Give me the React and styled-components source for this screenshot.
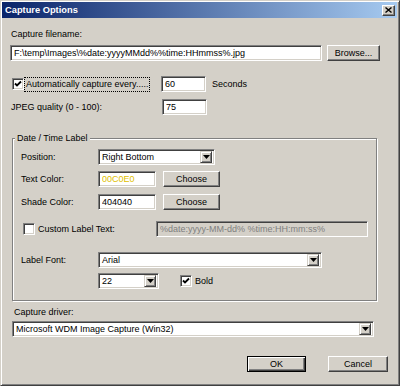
import React from 'react';
import styled, { createGlobalStyle } from 'styled-components';

const GlobalStyle = createGlobalStyle`
  body {
    margin: 0;
    background: #d4d0c8;
  }
`;

const Window = styled.div`
  width: 400px;
  height: 386px;
  box-sizing: border-box;
  background: #d4d0c8;
  border: 1px solid;
  border-color: #d4d0c8 #404040 #404040 #d4d0c8;
  box-shadow: inset 1px 1px #fff, inset -1px -1px #808080;
  padding: 1px 2px 2px 1px;
  font-family: "Liberation Sans", Arial, sans-serif;
  font-size: 9px;
  color: #000;
  display: flex;
  flex-direction: column;
`;

const TitleBar = styled.div`
  height: 16px;
  display: flex;
  align-items: center;
  justify-content: space-between;
  padding: 0 2px 0 3px;
  background: linear-gradient(to right, #0a246a, #a6caf0);
  color: #fff;
  font-weight: bold;
  font-size: 9.3px;
`;

const CloseButton = styled.div`
  width: 13px;
  height: 11px;
  box-sizing: border-box;
  background: #d4d0c8;
  border: 1px solid;
  border-color: #fff #404040 #404040 #fff;
  box-shadow: inset -1px -1px #808080;
  display: flex;
  align-items: center;
  justify-content: center;
`;

const Body = styled.div`
  display: flex;
  flex-direction: column;
  padding: 0 9px 0 8px;
`;

const Text = styled.div`
  line-height: 13px;
  margin-top: ${p => p.$mt || 0}px;
  margin-left: ${p => p.$ml || 0}px;
  white-space: nowrap;
`;

const Row = styled.div`
  display: flex;
  align-items: center;
  height: 16px;
  margin-top: ${p => p.$mt || 0}px;
`;

const sunken = `
  border: 1px solid;
  border-color: #808080 #fff #fff #808080;
  box-shadow: inset 1px 1px #404040, inset -1px -1px #d4d0c8;
`;

const Field = styled.input`
  ${sunken}
  box-sizing: border-box;
  width: ${p => p.$w}px;
  height: 16px;
  margin: 0 0 0 ${p => p.$ml || 0}px;
  padding: 0 3px;
  font: inherit;
  outline: none;
  background: ${p => (p.disabled ? '#d4d0c8' : '#fff')};
  color: ${p => (p.disabled ? '#808080' : p.$color || '#000')};
  -webkit-text-fill-color: ${p => (p.disabled ? '#808080' : p.$color || '#000')};
  opacity: 1;
`;

const Button = styled.button`
  box-sizing: border-box;
  width: ${p => p.$w}px;
  height: 16px;
  margin: 0 0 0 ${p => p.$ml || 0}px;
  padding: 0;
  font: inherit;
  color: #000;
  background: #d4d0c8;
  border: 1px solid;
  border-color: ${p => (p.$default ? '#000' : '#fff #404040 #404040 #fff')};
  box-shadow: ${p =>
    p.$default
      ? 'inset 1px 1px #fff, inset -1px -1px #404040, inset -2px -2px #808080'
      : 'inset -1px -1px #808080'};
`;

const Combo = styled.div`
  ${sunken}
  box-sizing: border-box;
  width: ${p => p.$w}px;
  height: 16px;
  margin-left: ${p => p.$ml || 0}px;
  background: #fff;
  display: flex;
  align-items: center;
  padding: 2px;
`;

const ComboText = styled.span`
  flex: 1;
  padding-left: 1px;
  white-space: nowrap;
  overflow: hidden;
`;

const ComboArrow = styled.span`
  box-sizing: border-box;
  width: 12px;
  height: 12px;
  background: #d4d0c8;
  border: 1px solid;
  border-color: #d4d0c8 #404040 #404040 #d4d0c8;
  box-shadow: inset 1px 1px #fff, inset -1px -1px #808080;
  display: flex;
  align-items: center;
  justify-content: center;
`;

const Check = styled.span`
  ${sunken}
  box-sizing: border-box;
  width: 12px;
  height: 12px;
  flex: none;
  margin-left: ${p => p.$ml || 0}px;
  background: #fff;
  display: flex;
  align-items: center;
  justify-content: center;
`;

const CheckArea = styled.div`
  display: flex;
  align-items: center;
  width: ${p => p.$w}px;
  flex: none;
`;

const FocusLabel = styled.span`
  margin-left: 1px;
  padding: 0 1px;
  line-height: 13px;
  white-space: nowrap;
  outline: 1px dotted #000;
  outline-offset: 0;
`;

const Label = styled.span`
  width: ${p => p.$w || 77}px;
  flex: none;
  margin-left: ${p => p.$ml || 0}px;
  line-height: 13px;
  white-space: nowrap;
`;

const Group = styled.fieldset`
  width: 365px;
  box-sizing: border-box;
  margin: 17px 0 0 2px;
  padding: 0;
  min-width: 0;
  border: 1px solid #808080;
  box-shadow: inset 1px 1px #fff, 1px 1px #fff;
`;

const Legend = styled.legend`
  margin-left: 2px;
  padding: 0 2px;
  line-height: 13px;
  background: #d4d0c8;
`;

const GroupBody = styled.div`
  display: flex;
  flex-direction: column;
  padding: 4px 0 11px 8px;
`;

const ButtonRow = styled.div`
  display: flex;
  justify-content: flex-end;
  margin-top: 19px;
`;

const Arrow = () => (
  <svg width="7" height="4" viewBox="0 0 7 4">
    <path d="M0 0h7L3.5 4z" fill="#000" />
  </svg>
);

const Tick = () => (
  <svg width="8" height="8" viewBox="0 0 8 8">
    <path d="M1 3.5l2 2L7 1.5" stroke="#000" strokeWidth="1.8" fill="none" />
  </svg>
);

const Select = ({ w, ml, value }) => (
  <Combo $w={w} $ml={ml}>
    <ComboText>{value}</ComboText>
    <ComboArrow>
      <Arrow />
    </ComboArrow>
  </Combo>
);

export default function App() {
  return (
    <>
      <GlobalStyle />
      <Window>
        <TitleBar>
          <span>Capture Options</span>
          <CloseButton>
            <svg width="7" height="6" viewBox="0 0 7 6">
              <path d="M0.5 0.5l6 5M6.5 0.5l-6 5" stroke="#000" strokeWidth="1.4" />
            </svg>
          </CloseButton>
        </TitleBar>
        <Body>
          <Text $mt={10} $ml={1}>Capture filename:</Text>
          <Row $mt={4}>
            <Field $w={312} readOnly defaultValue="F:\temp\Images\%date:yyyyMMdd%%time:HHmmss%.jpg" />
            <Button $w={53} $ml={5}>Browse...</Button>
          </Row>
          <Row $mt={15}>
            <CheckArea $w={151}>
              <Check $ml={2}><Tick /></Check>
              <FocusLabel>Automatically capture every.....</FocusLabel>
            </CheckArea>
            <Field $w={45} readOnly defaultValue="60" />
            <Label $ml={6}>Seconds</Label>
          </Row>
          <Row $mt={7}>
            <Label $w={151} $ml={1}>JPEG quality (0 - 100):</Label>
            <Field $w={45} readOnly defaultValue="75" />
          </Row>
          <Group>
            <Legend>Date / Time Label</Legend>
            <GroupBody>
              <Row>
                <Label>Position:</Label>
                <Select w={117} value="Right Bottom" />
              </Row>
              <Row $mt={6}>
                <Label>Text Color:</Label>
                <Field $w={58} readOnly defaultValue="00C0E0" $color="#e0c000" />
                <Button $w={57} $ml={7}>Choose</Button>
              </Row>
              <Row $mt={7}>
                <Label>Shade Color:</Label>
                <Field $w={58} readOnly defaultValue="404040" />
                <Button $w={57} $ml={7}>Choose</Button>
              </Row>
              <Row $mt={11}>
                <CheckArea $w={135}>
                  <Check $ml={2} />
                  <Label $w={100} $ml={3}>Custom Label Text:</Label>
                </CheckArea>
                <Field $w={212} disabled defaultValue="%date:yyyy-MM-dd% %time:HH:mm:ss%" />
              </Row>
              <Row $mt={15}>
                <Label>Label Font:</Label>
                <Select w={224} value="Arial" />
              </Row>
              <Row $mt={5}>
                <Label />
                <Select w={61} value="22" />
                <Check $ml={21}><Tick /></Check>
                <Label $w={40} $ml={3}>Bold</Label>
              </Row>
            </GroupBody>
          </Group>
          <Text $mt={5} $ml={4}>Capture driver:</Text>
          <Row $mt={2}>
            <Select w={362} ml={2} value="Microsoft WDM Image Capture (Win32)" />
          </Row>
          <ButtonRow>
            <Button $w={59} $default>OK</Button>
            <Button $w={60} $ml={22}>Cancel</Button>
          </ButtonRow>
        </Body>
      </Window>
    </>
  );
}
